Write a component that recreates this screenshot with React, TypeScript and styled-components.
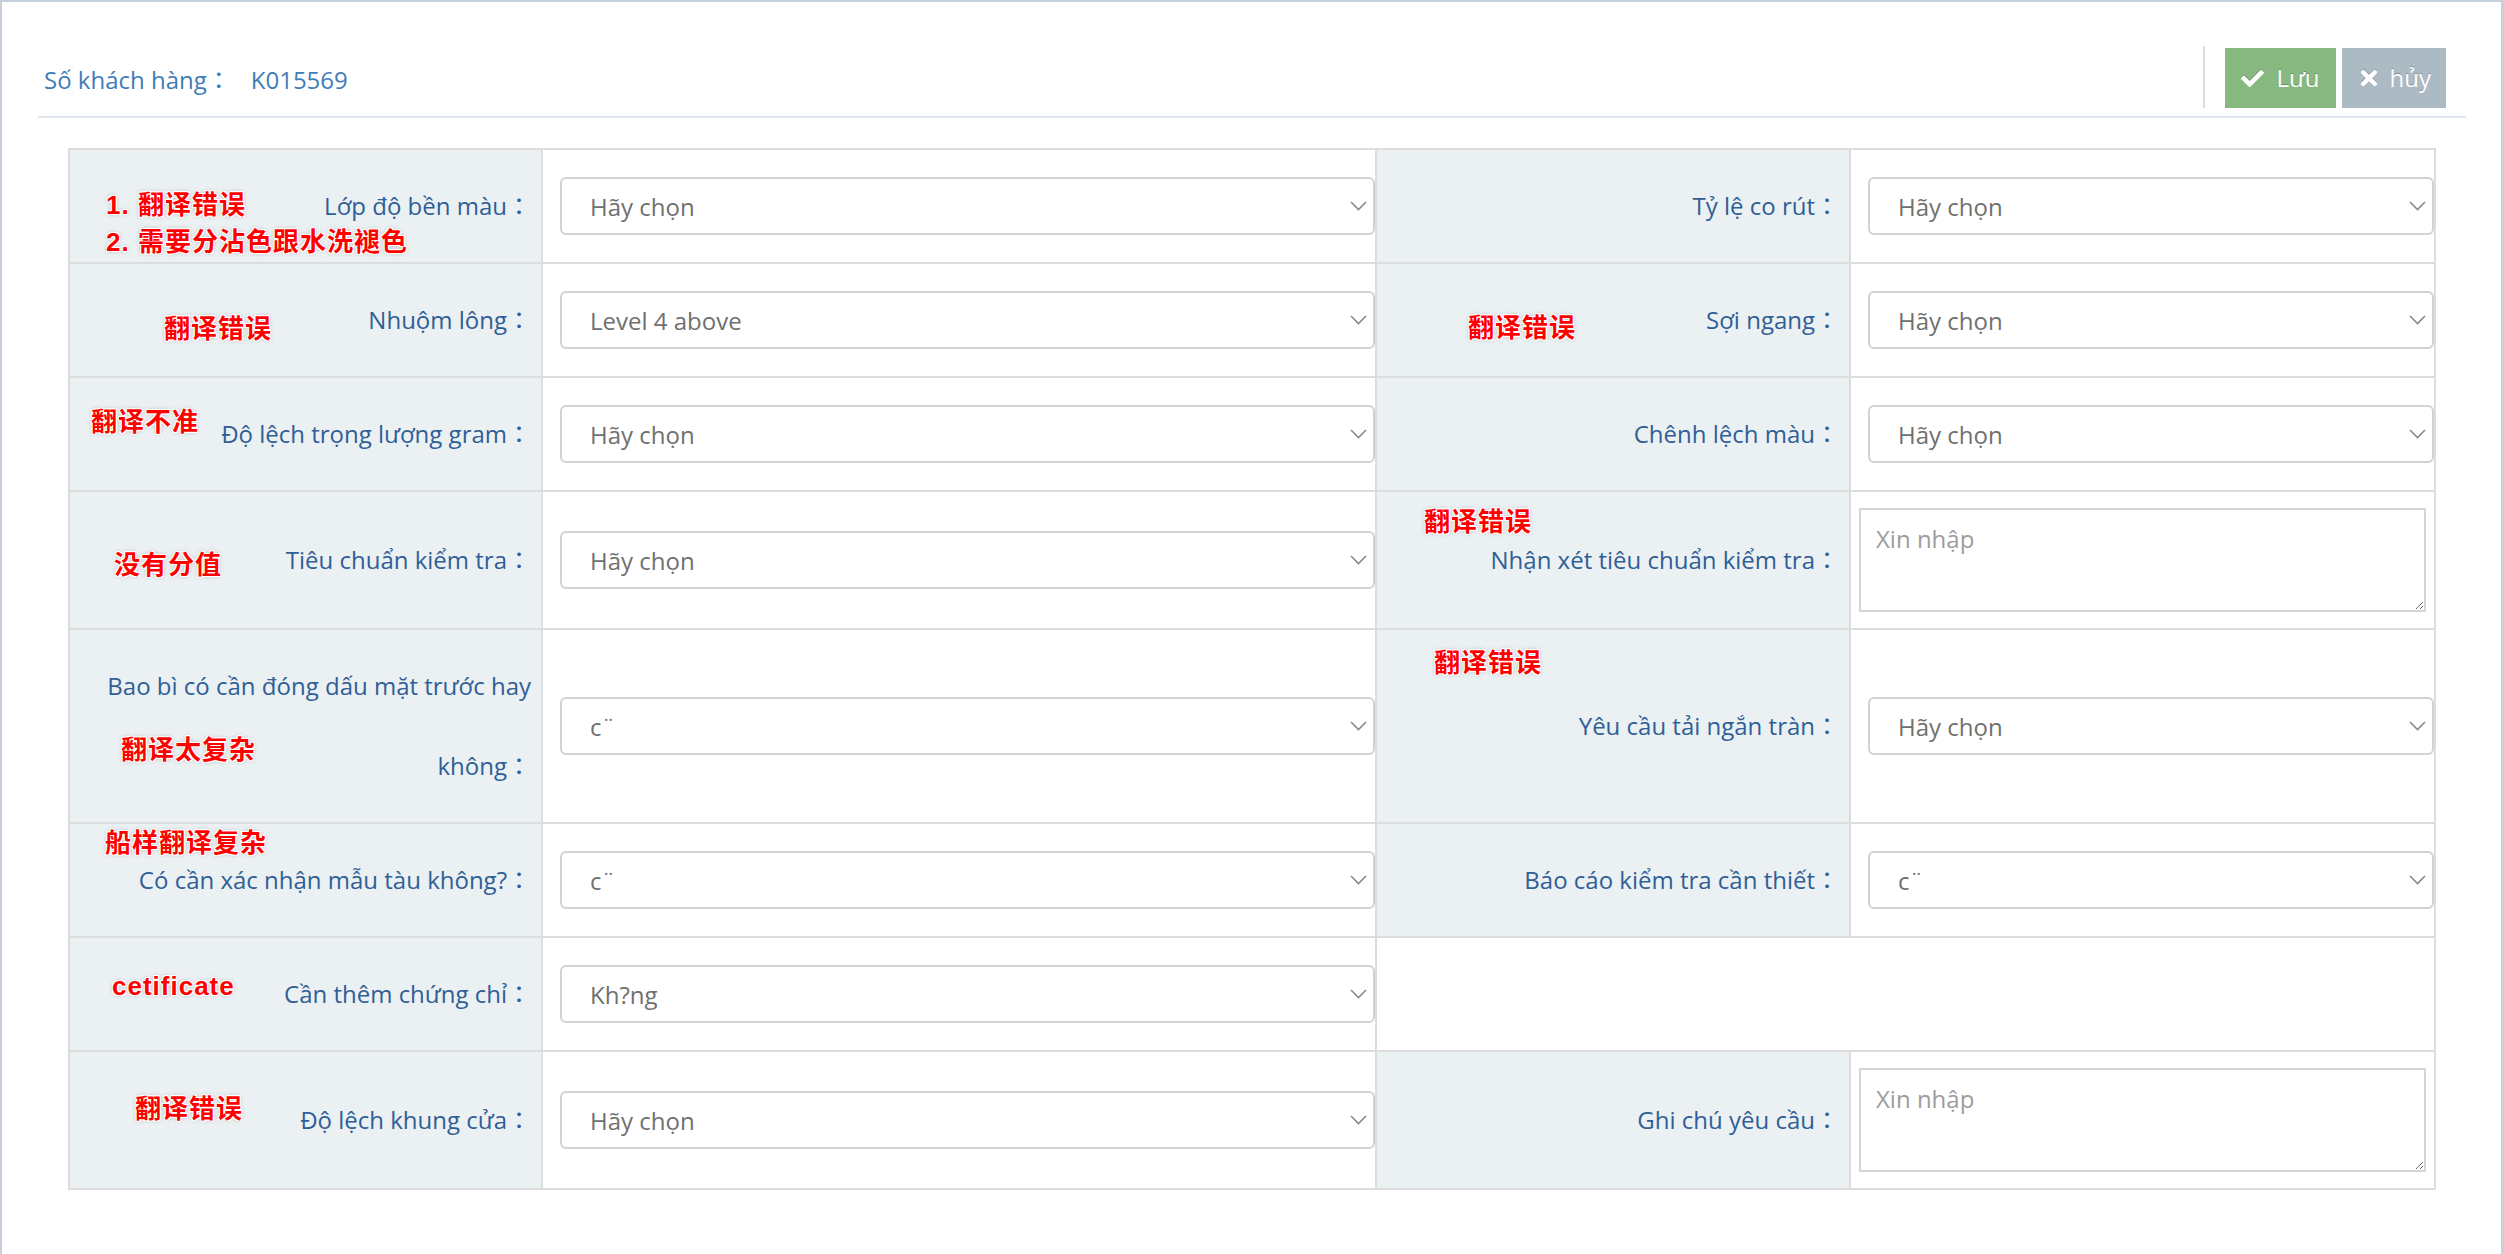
import React from 'react';
import styled, { createGlobalStyle } from 'styled-components';
import { FaCheck, FaTimes } from 'react-icons/fa';

const GlobalStyle = createGlobalStyle`
  html, body { margin: 0; padding: 0; background: #fff; }
  body { font-family: "Open Sans", "Noto Sans CJK TC", sans-serif; }
  *, *::before, *::after { box-sizing: border-box; }
`;

const Page = styled.div`
  min-height: 100vh;
  border-style: solid;
  border-color: #c5d0dc;
  border-width: 2px 3px 0 2px;
  padding: 0 35px 40px 36px;
  background: #fff;
`;

const Header = styled.header`
  display: flex;
  align-items: center;
  justify-content: space-between;
  padding: 44px 20px 8px 6px;
  border-bottom: 2px solid #dfe8f0;
`;

const Title = styled.div`
  display: flex;
  align-items: center;
  padding-top: 6px;
  font-size: 24px;
  line-height: 34px;
  color: #3f7db8;
`;

const TitleValue = styled.span`
  margin-left: 20px;
`;

const Actions = styled.div`
  display: flex;
  align-items: flex-end;
  gap: 6px;
`;

const Divider = styled.span`
  width: 2px;
  height: 62px;
  background: #dcdcdc;
  margin-right: 14px;
`;

const ActionButton = styled.button<{ $variant: 'success' | 'default' }>`
  display: inline-flex;
  align-items: center;
  gap: ${(p) => (p.$variant === 'success' ? '12px' : '9px')};
  height: 60px;
  padding: 0 ${(p) => (p.$variant === 'success' ? '16px' : '15px')};
  border: 0;
  background: ${(p) => (p.$variant === 'success' ? '#87b87f' : '#abbac3')};
  color: #fff;
  font-family: "Open Sans", sans-serif;
  font-size: 24px;
  line-height: 34px;
  text-shadow: 0 -1px 0 rgba(0, 0, 0, 0.25);
  cursor: pointer;
  svg { filter: drop-shadow(0 -1px 0 rgba(0, 0, 0, 0.2)); }
`;

const FormTable = styled.div`
  display: grid;
  grid-template-columns: 473fr 834fr 474fr 585fr;
  margin: 30px 30px 0 30px;
  border-top: 2px solid #dddddd;
  border-left: 2px solid #dddddd;
`;

const LabelCell = styled.div`
  position: relative;
  display: flex;
  align-items: center;
  justify-content: flex-end;
  min-height: 114px;
  padding: 16px 10px 16px 16px;
  background: #ebf0f3;
  border-right: 2px solid #dddddd;
  border-bottom: 2px solid #dddddd;
`;

const LabelText = styled.span`
  font-size: 24px;
  line-height: 80px;
  color: #2f5f96;
  text-align: right;
`;

const ValueCell = styled.div<{ $kind: 'select' | 'text' }>`
  display: flex;
  align-items: center;
  min-height: 114px;
  padding: ${(p) => (p.$kind === 'text' ? '16px 8px' : '0 0 0 17px')};
  background: #fff;
  border-right: 2px solid #dddddd;
  border-bottom: 2px solid #dddddd;
`;

const EmptyCell = styled.div`
  grid-column: span 2;
  min-height: 114px;
  background: #fff;
  border-right: 2px solid #dddddd;
  border-bottom: 2px solid #dddddd;
`;

const SelectWrap = styled.div`
  position: relative;
  width: 100%;
`;

const Select = styled.select`
  appearance: none;
  -webkit-appearance: none;
  display: block;
  width: 100%;
  height: 58px;
  padding: 0 44px 0 28px;
  border: 2px solid #d2d2d6;
  border-radius: 6px;
  background: #fff;
  color: #707070;
  font-family: "Open Sans", sans-serif;
  font-size: 24px;
  outline: none;
`;

const Chevron = styled.svg`
  position: absolute;
  right: 8px;
  top: 50%;
  margin-top: -5px;
  pointer-events: none;
`;

const TextArea = styled.textarea`
  display: block;
  width: 100%;
  height: 104px;
  padding: 12px 15px;
  border: 2px solid #d5d5d5;
  border-radius: 0;
  background: #fff;
  color: #555;
  font-family: "Open Sans", sans-serif;
  font-size: 24px;
  line-height: 34px;
  outline: none;
  &::placeholder { color: #9d9d9d; }
`;

const Note = styled.div<{ $top: number; $left: number }>`
  position: absolute;
  top: ${(p) => p.$top}px;
  left: ${(p) => p.$left}px;
  font-family: "Liberation Sans", "Noto Sans CJK SC", sans-serif;
  font-weight: 700;
  font-size: 26px;
  line-height: 37px;
  letter-spacing: 1px;
  color: #ff0000;
  white-space: nowrap;
  pointer-events: none;
  text-shadow: 1px 1px 0 #fff, -1px -1px 0 #fff, 1px -1px 0 #fff, -1px 1px 0 #fff,
    0 0 3px #fff, 0 0 4px rgba(0, 0, 0, 0.35);
`;

type NoteSpec = { lines: string[]; top: number; left: number };
type Field = {
  label: string;
  select?: string;
  textarea?: boolean;
  note?: NoteSpec;
};

const rows: [Field, Field | null][] = [
  [
    { label: 'Lớp độ bền màu', select: 'Hãy chọn', note: { lines: ['1. 翻译错误', '2. 需要分沾色跟水洗褪色'], top: 37, left: 36 } },
    { label: 'Tỷ lệ co rút', select: 'Hãy chọn' },
  ],
  [
    { label: 'Nhuộm lông', select: 'Level 4 above', note: { lines: ['翻译错误'], top: 47, left: 94 } },
    { label: 'Sợi ngang', select: 'Hãy chọn', note: { lines: ['翻译错误'], top: 46, left: 91 } },
  ],
  [
    { label: 'Độ lệch trọng lượng gram', select: 'Hãy chọn', note: { lines: ['翻译不准'], top: 26, left: 21 } },
    { label: 'Chênh lệch màu', select: 'Hãy chọn' },
  ],
  [
    { label: 'Tiêu chuẩn kiểm tra', select: 'Hãy chọn', note: { lines: ['没有分值'], top: 55, left: 44 } },
    { label: 'Nhận xét tiêu chuẩn kiểm tra', textarea: true, note: { lines: ['翻译错误'], top: 12, left: 47 } },
  ],
  [
    { label: 'Bao bì có cần đóng dấu mặt trước hay không', select: 'c¨', note: { lines: ['翻译太复杂'], top: 102, left: 51 } },
    { label: 'Yêu cầu tải ngắn tràn', select: 'Hãy chọn', note: { lines: ['翻译错误'], top: 15, left: 57 } },
  ],
  [
    { label: 'Có cần xác nhận mẫu tàu không?', select: 'c¨', note: { lines: ['船样翻译复杂'], top: 1, left: 35 } },
    { label: 'Báo cáo kiểm tra cần thiết', select: 'c¨' },
  ],
  [
    { label: 'Cần thêm chứng chỉ', select: 'Kh?ng', note: { lines: ['cetificate'], top: 30, left: 42 } },
    null,
  ],
  [
    { label: 'Độ lệch khung cửa', select: 'Hãy chọn', note: { lines: ['翻译错误'], top: 39, left: 65 } },
    { label: 'Ghi chú yêu cầu', textarea: true },
  ],
];

const SelectBox: React.FC<{ value: string }> = ({ value }) => (
  <SelectWrap>
    <Select defaultValue={value}>
      <option value={value}>{value}</option>
    </Select>
    <Chevron width="17" height="10" viewBox="0 0 17 10" aria-hidden>
      <polyline points="1,1 8.5,8.5 16,1" fill="none" stroke="#8a8a8a" strokeWidth="1.6" />
    </Chevron>
  </SelectWrap>
);

const FieldCells: React.FC<{ field: Field }> = ({ field }) => (
  <>
    <LabelCell>
      {field.note && (
        <Note $top={field.note.top} $left={field.note.left}>
          {field.note.lines.map((l) => (
            <div key={l}>{l}</div>
          ))}
        </Note>
      )}
      <LabelText>{field.label}：</LabelText>
    </LabelCell>
    <ValueCell $kind={field.textarea ? 'text' : 'select'}>
      {field.textarea ? <TextArea placeholder="Xin nhập" /> : <SelectBox value={field.select || ''} />}
    </ValueCell>
  </>
);

export default function App() {
  return (
    <>
      <GlobalStyle />
      <Page>
        <Header>
          <Title>
            <span>Số khách hàng：</span>
            <TitleValue>K015569</TitleValue>
          </Title>
          <Actions>
            <Divider />
            <ActionButton $variant="success">
              <FaCheck size={23} />
              Lưu
            </ActionButton>
            <ActionButton $variant="default">
              <FaTimes size={24} />
              hủy
            </ActionButton>
          </Actions>
        </Header>
        <FormTable>
          {rows.map(([left, right], i) => (
            <React.Fragment key={i}>
              <FieldCells field={left} />
              {right ? <FieldCells field={right} /> : <EmptyCell />}
            </React.Fragment>
          ))}
        </FormTable>
      </Page>
    </>
  );
}
